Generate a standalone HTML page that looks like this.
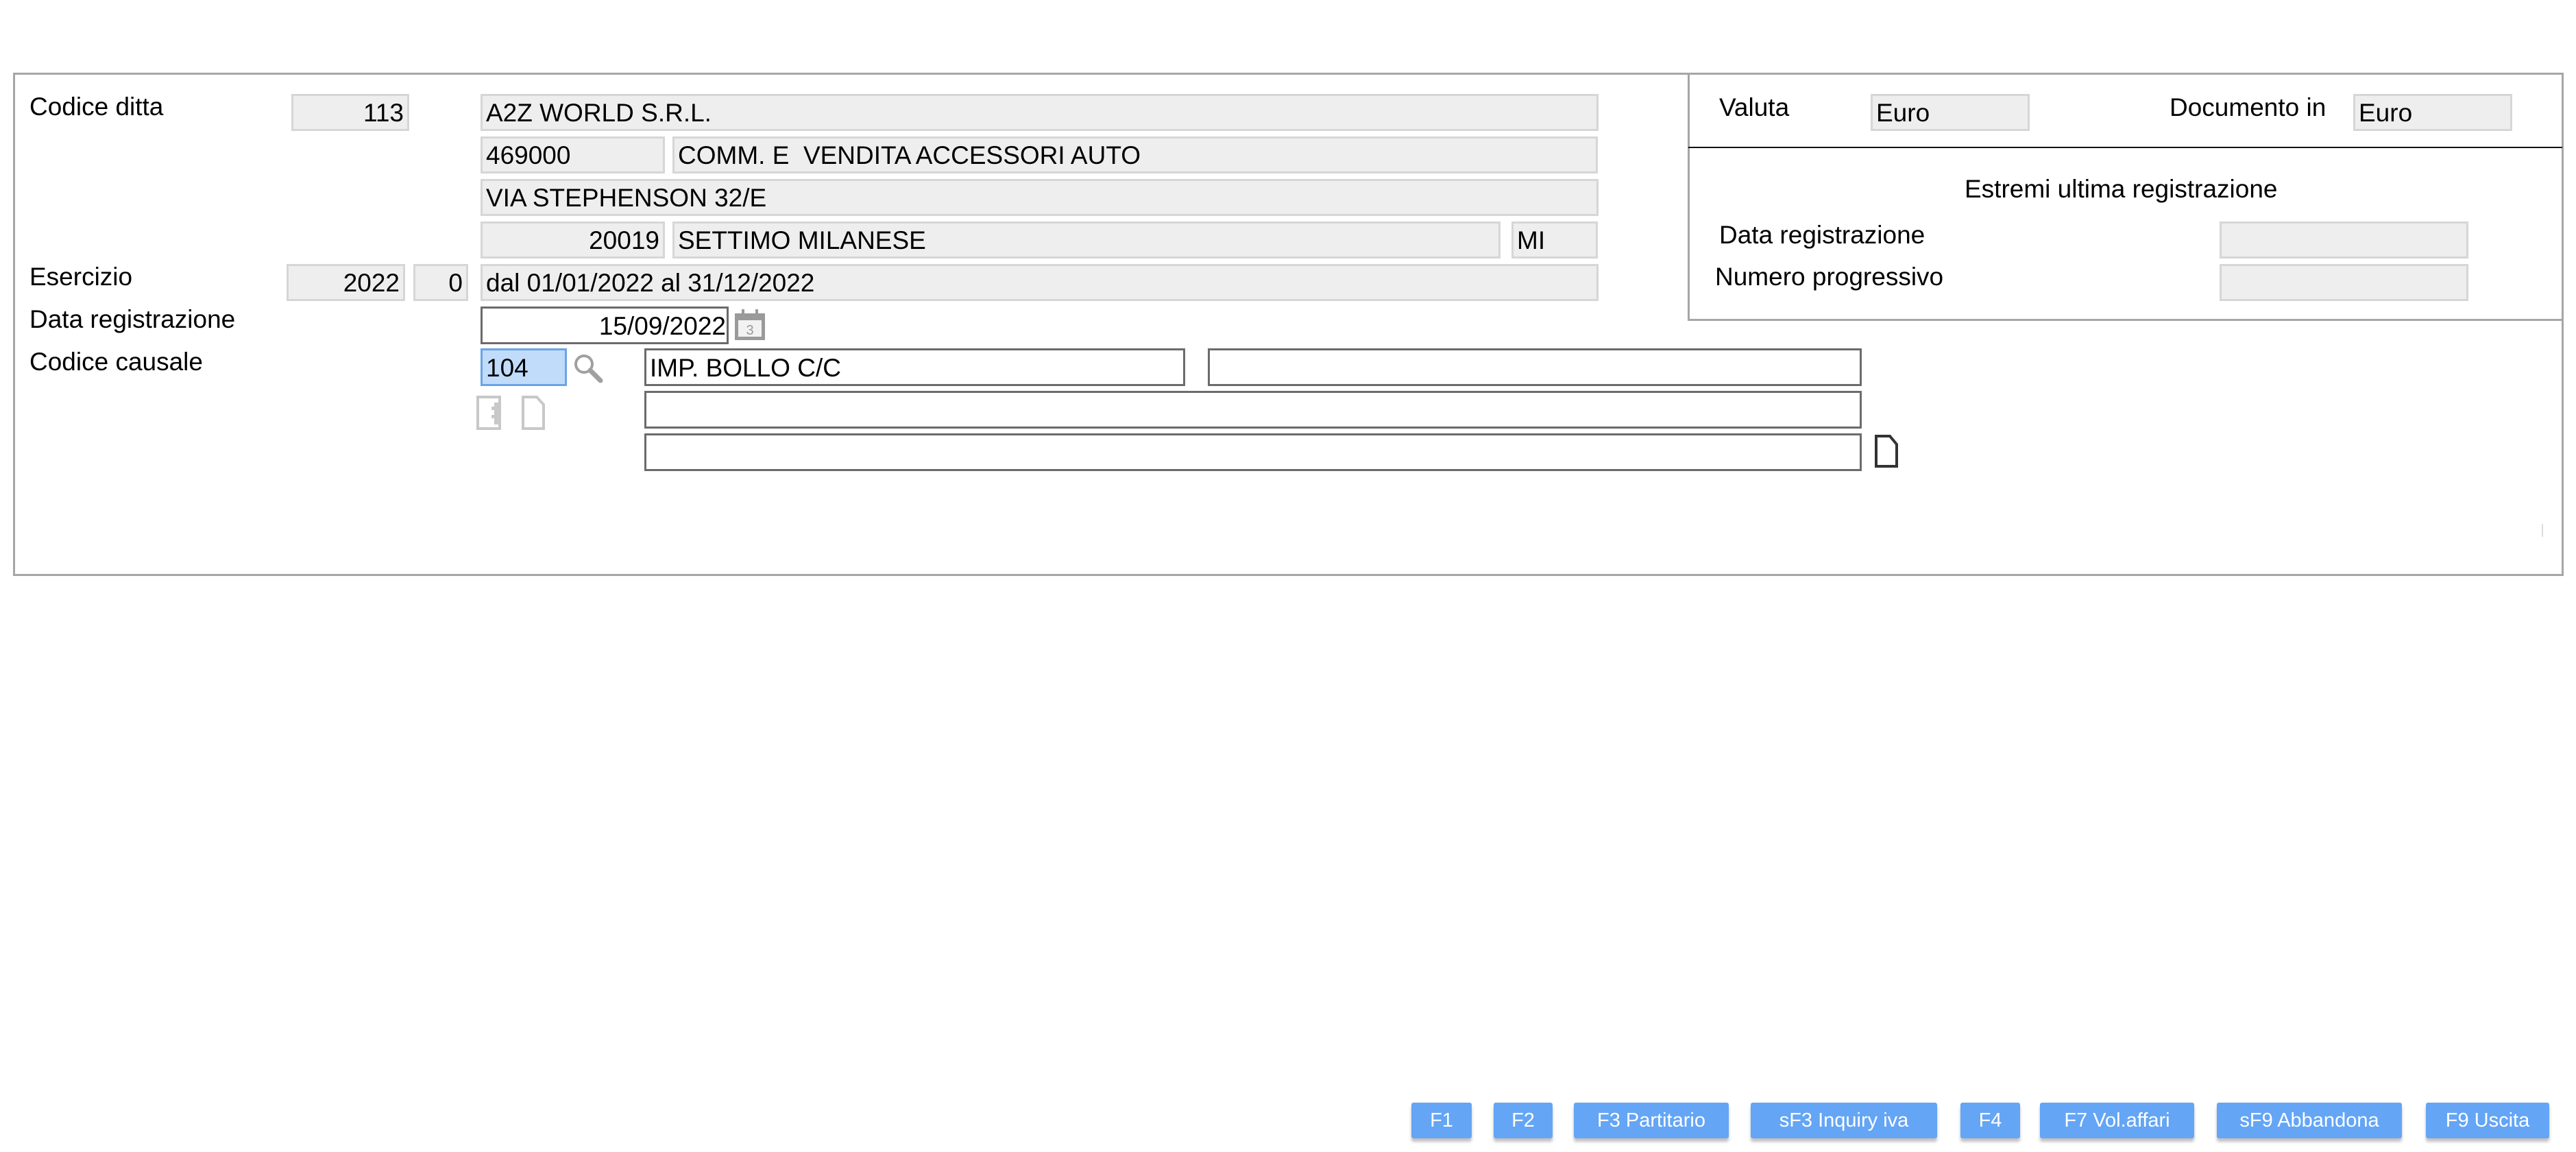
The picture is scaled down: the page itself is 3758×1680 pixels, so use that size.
<!DOCTYPE html>
<html><head><meta charset="utf-8"><style>
*{margin:0;padding:0;box-sizing:border-box}
body{width:3758px;height:1680px;background:#fff;position:relative;overflow:hidden;font-family:"Liberation Sans",Arial,sans-serif;font-size:37px;color:#000}
.a{position:absolute}
.g{position:absolute;background:#eeeeee;border:3px solid #d6d6d6;height:54px;line-height:50px;padding:0 5px;white-space:nowrap;overflow:hidden}
.r{text-align:right}
.w{position:absolute;background:#fff;border:3px solid #6b6b6b;height:55px;line-height:51px;padding:0 5px}
.l{position:absolute;line-height:38px;white-space:nowrap}
.b{position:absolute;top:1608px;height:52px;background:#64a5f5;color:#fff;font-size:29px;line-height:52px;text-align:center;border-radius:3px;box-shadow:0 5px 4px rgba(0,0,0,.25)}
</style></head><body>
<div class="a" style="left:19px;top:106px;width:3721px;height:734px;border:3px solid #a6a6a6"></div>
<div class="a" style="left:2462px;top:106px;width:1278px;height:362px;border:3px solid #a6a6a6;border-top:none"></div>
<div class="a" style="left:2463px;top:214px;width:1275px;height:2px;background:#111"></div>

<div class="l" style="left:43px;top:137px">Codice ditta</div>
<div class="l" style="left:43px;top:385px">Esercizio</div>
<div class="l" style="left:43px;top:447px">Data registrazione</div>
<div class="l" style="left:43px;top:509px">Codice causale</div>

<div class="g r" style="left:425px;top:137px;width:172px">113</div>
<div class="g" style="left:701px;top:137px;width:1631px">A2Z WORLD S.R.L.</div>
<div class="g" style="left:701px;top:199px;width:269px">469000</div>
<div class="g" style="left:981px;top:199px;width:1350px">COMM. E&nbsp; VENDITA ACCESSORI AUTO</div>
<div class="g" style="left:701px;top:261px;width:1631px">VIA STEPHENSON 32/E</div>
<div class="g r" style="left:701px;top:323px;width:269px">20019</div>
<div class="g" style="left:981px;top:323px;width:1208px">SETTIMO MILANESE</div>
<div class="g" style="left:2205px;top:323px;width:126px">MI</div>
<div class="g r" style="left:418px;top:385px;width:173px">2022</div>
<div class="g r" style="left:603px;top:385px;width:80px">0</div>
<div class="g" style="left:701px;top:385px;width:1631px">dal 01/01/2022 al 31/12/2022</div>

<div class="w r" style="left:701px;top:447px;width:362px;padding-right:1px">15/09/2022</div>
<svg class="a" style="left:1072px;top:451px" width="44" height="45" viewBox="0 0 44 45"><rect x="0" y="6" width="44" height="39" fill="#9a9a9a"/><rect x="10" y="0" width="4" height="10" fill="#9a9a9a"/><rect x="30" y="0" width="4" height="10" fill="#9a9a9a"/><rect x="5" y="16" width="34" height="24" fill="#f2f2f2"/><text x="22" y="37" font-size="20" text-anchor="middle" fill="#9a9a9a" font-family="Liberation Sans">3</text></svg>

<div class="a" style="left:701px;top:508px;width:126px;height:55px;background:#c0dcfa;border:3px solid #6aa4e6;line-height:51px;padding-left:5px">104</div>
<svg class="a" style="left:836px;top:515px" width="46" height="46" viewBox="0 0 46 46"><circle cx="16" cy="16" r="12" fill="none" stroke="#a0a0a0" stroke-width="4"/><line x1="25" y1="25" x2="40" y2="40" stroke="#a0a0a0" stroke-width="7" stroke-linecap="round"/></svg>
<svg class="a" style="left:695px;top:577px" width="100" height="50" viewBox="0 0 100 50"><rect x="2" y="2" width="32" height="46" fill="none" stroke="#c8c8c8" stroke-width="4"/><rect x="26" y="10" width="8" height="32" fill="#c8c8c8"/><rect x="22" y="16" width="4" height="5" fill="#c8c8c8"/><rect x="22" y="28" width="4" height="5" fill="#c8c8c8"/><path d="M68 2H88L98 13V48H68Z" fill="none" stroke="#c8c8c8" stroke-width="4"/></svg>

<div class="w" style="left:940px;top:508px;width:789px">IMP. BOLLO C/C</div>
<div class="w" style="left:1762px;top:508px;width:954px"></div>
<div class="w" style="left:940px;top:570px;width:1776px"></div>
<div class="w" style="left:940px;top:632px;width:1776px"></div>
<svg class="a" style="left:2735px;top:634px" width="34" height="48" viewBox="0 0 34 48"><path d="M2 2H22L32 14V46H2Z" fill="none" stroke="#333" stroke-width="4"/></svg>

<div class="l" style="left:2508px;top:138px">Valuta</div>
<div class="g" style="left:2729px;top:137px;width:232px">Euro</div>
<div class="l" style="left:3165px;top:138px">Documento in</div>
<div class="g" style="left:3433px;top:137px;width:232px">Euro</div>
<div class="l" style="left:2866px;top:257px">Estremi ultima registrazione</div>
<div class="l" style="left:2508px;top:324px">Data registrazione</div>
<div class="g" style="left:3238px;top:323px;width:363px"></div>
<div class="l" style="left:2502px;top:385px">Numero progressivo</div>
<div class="g" style="left:3238px;top:385px;width:363px"></div>
<div class="a" style="left:3708px;top:764px;width:2px;height:19px;background:#ddd"></div>

<div class="b" style="left:2059px;width:88px">F1</div>
<div class="b" style="left:2179px;width:86px">F2</div>
<div class="b" style="left:2296px;width:226px">F3 Partitario</div>
<div class="b" style="left:2554px;width:272px">sF3 Inquiry iva</div>
<div class="b" style="left:2860px;width:87px">F4</div>
<div class="b" style="left:2976px;width:225px">F7 Vol.affari</div>
<div class="b" style="left:3234px;width:270px">sF9 Abbandona</div>
<div class="b" style="left:3539px;width:180px">F9 Uscita</div>
</body></html>
